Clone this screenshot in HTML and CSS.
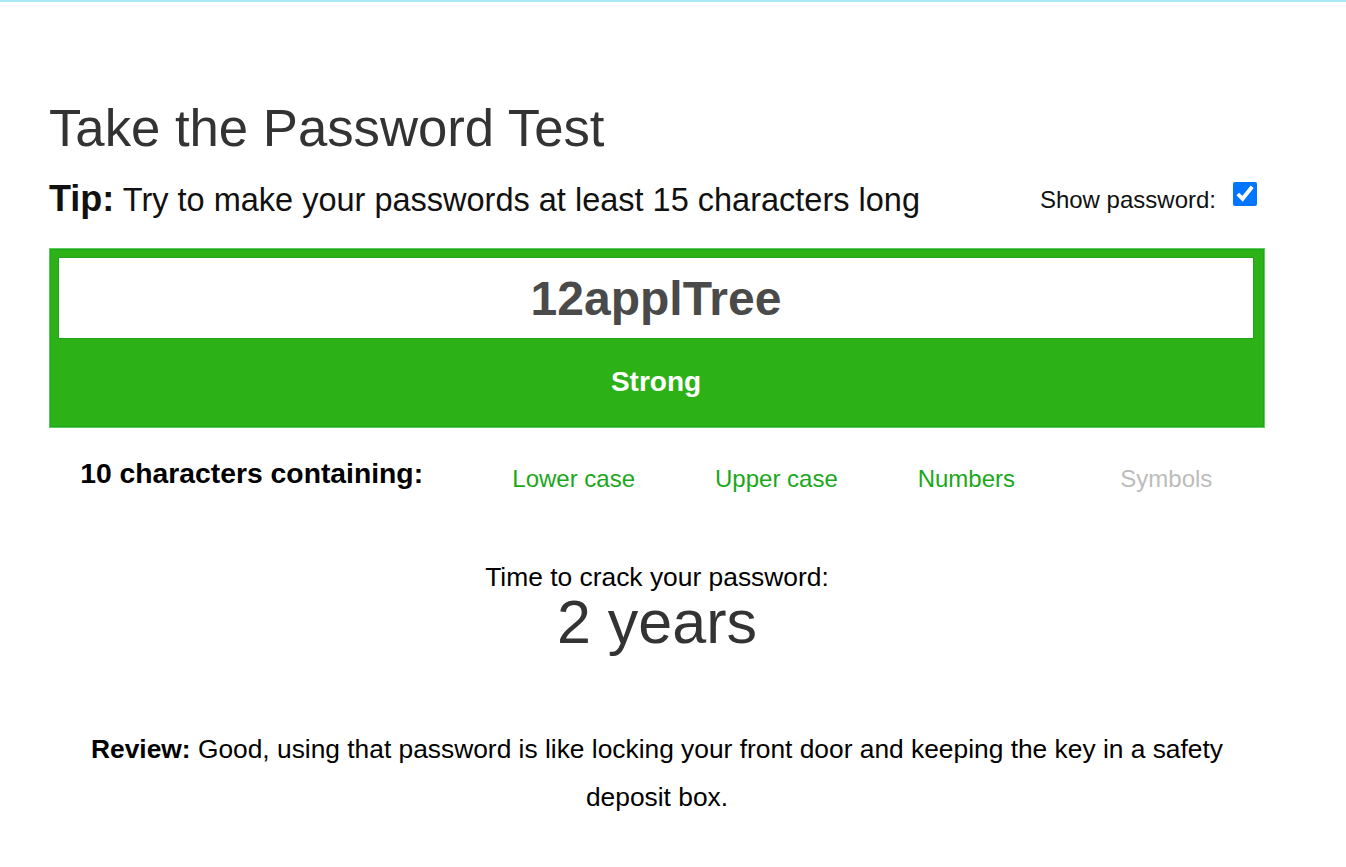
FILE: index.html
```html
<!DOCTYPE html>
<html lang="en">
<head>
<meta charset="utf-8">
<title>Take the Password Test</title>
<link rel="stylesheet" href="styles.css">
</head>
<body>
<div class="topbar"></div>
<main class="page">
  <h1 class="title">Take the Password Test</h1>
  <div class="tip-row">
    <p class="tip"><b class="tip-label">Tip:</b> Try to make your passwords at least 15 characters long</p>
    <label class="show">
      <span class="show-text">Show password:</span>
      <input class="show-box" type="checkbox" checked>
    </label>
  </div>
  <div class="meter">
    <input class="pw-input" type="text" value="12applTree">
    <div class="strength">Strong</div>
  </div>
  <div class="criteria">
    <div class="criteria-label">10 characters containing:</div>
    <div class="crit on">Lower case</div>
    <div class="crit on">Upper case</div>
    <div class="crit on">Numbers</div>
    <div class="crit off">Symbols</div>
  </div>
  <div class="crack">
    <div class="crack-label">Time to crack your password:</div>
    <div class="crack-time">2 years</div>
  </div>
  <p class="review"><b>Review:</b> Good, using that password is like locking your front door and keeping the key in a safety deposit box.</p>
</main>
</body>
</html>
```

FILE: styles.css
```css
html, body {
  margin: 0;
  padding: 0;
  background: #ffffff;
}
body {
  font-family: "Liberation Sans", Arial, sans-serif;
  color: #000;
}
.topbar {
  height: 2px;
  background: #a9e9f8;
}
.page {
  width: 1216px;
  margin-left: 49px;
  padding-top: 96px;
}
.title {
  margin: 0;
  font-size: 52.7px;
  line-height: 60px;
  font-weight: normal;
  color: #333333;
}
.tip-row {
  margin-top: 21px;
  display: flex;
  justify-content: space-between;
  align-items: flex-start;
}
.tip {
  margin: 0;
  font-size: 32.5px;
  line-height: 40px;
  color: #111;
}
.tip-label {
  font-size: 36px;
}
.show {
  display: flex;
  align-items: flex-start;
  margin: 7px 8px 0 0;
}
.show-text {
  font-size: 24px;
  line-height: 28px;
  color: #111;
}
.show-box {
  width: 24px;
  height: 24px;
  margin: -4px 0 0 17px;
}
.meter {
  margin-top: 28px;
  background: #2cb117;
  border: 1px solid #5fca5f;
  box-shadow: inset 0 0 0 1px #1fa81a;
  padding: 8px 10px 0 8px;
}
.pw-input {
  display: block;
  box-sizing: border-box;
  width: 1196px;
  height: 82px;
  margin: 0;
  border: 1px solid #22a51c;
  background: #fff;
  text-align: center;
  font-family: "Liberation Sans", Arial, sans-serif;
  font-weight: bold;
  font-size: 48px;
  color: #4a4a4a;
  outline: none;
  padding: 0;
}
.strength {
  height: 88px;
  line-height: 86px;
  text-align: center;
  color: #fff;
  font-weight: bold;
  font-size: 28px;
}
.criteria {
  margin-top: 28px;
  display: grid;
  grid-template-columns: repeat(6, 1fr);
  align-items: start;
}
.criteria-label {
  grid-column: span 2;
  text-align: center;
  font-weight: bold;
  font-size: 28.3px;
  line-height: 34px;
  color: #000;
}
.crit {
  padding-top: 6px;
  padding-left: 58px;
  font-size: 24px;
  line-height: 34px;
  white-space: nowrap;
}
.crit.on {
  color: #1aa81a;
}
.crit.off {
  color: #bcbcbc;
}
.crack {
  margin-top: 66px;
  text-align: center;
}
.crack-label {
  font-size: 26.4px;
  line-height: 30px;
  color: #000;
}
.crack-time {
  font-size: 61px;
  line-height: 60px;
  color: #333333;
}
.review {
  margin: 73px 0 0;
  padding: 0 36px;
  text-align: center;
  font-size: 26.35px;
  line-height: 48px;
  color: #000;
}
```
